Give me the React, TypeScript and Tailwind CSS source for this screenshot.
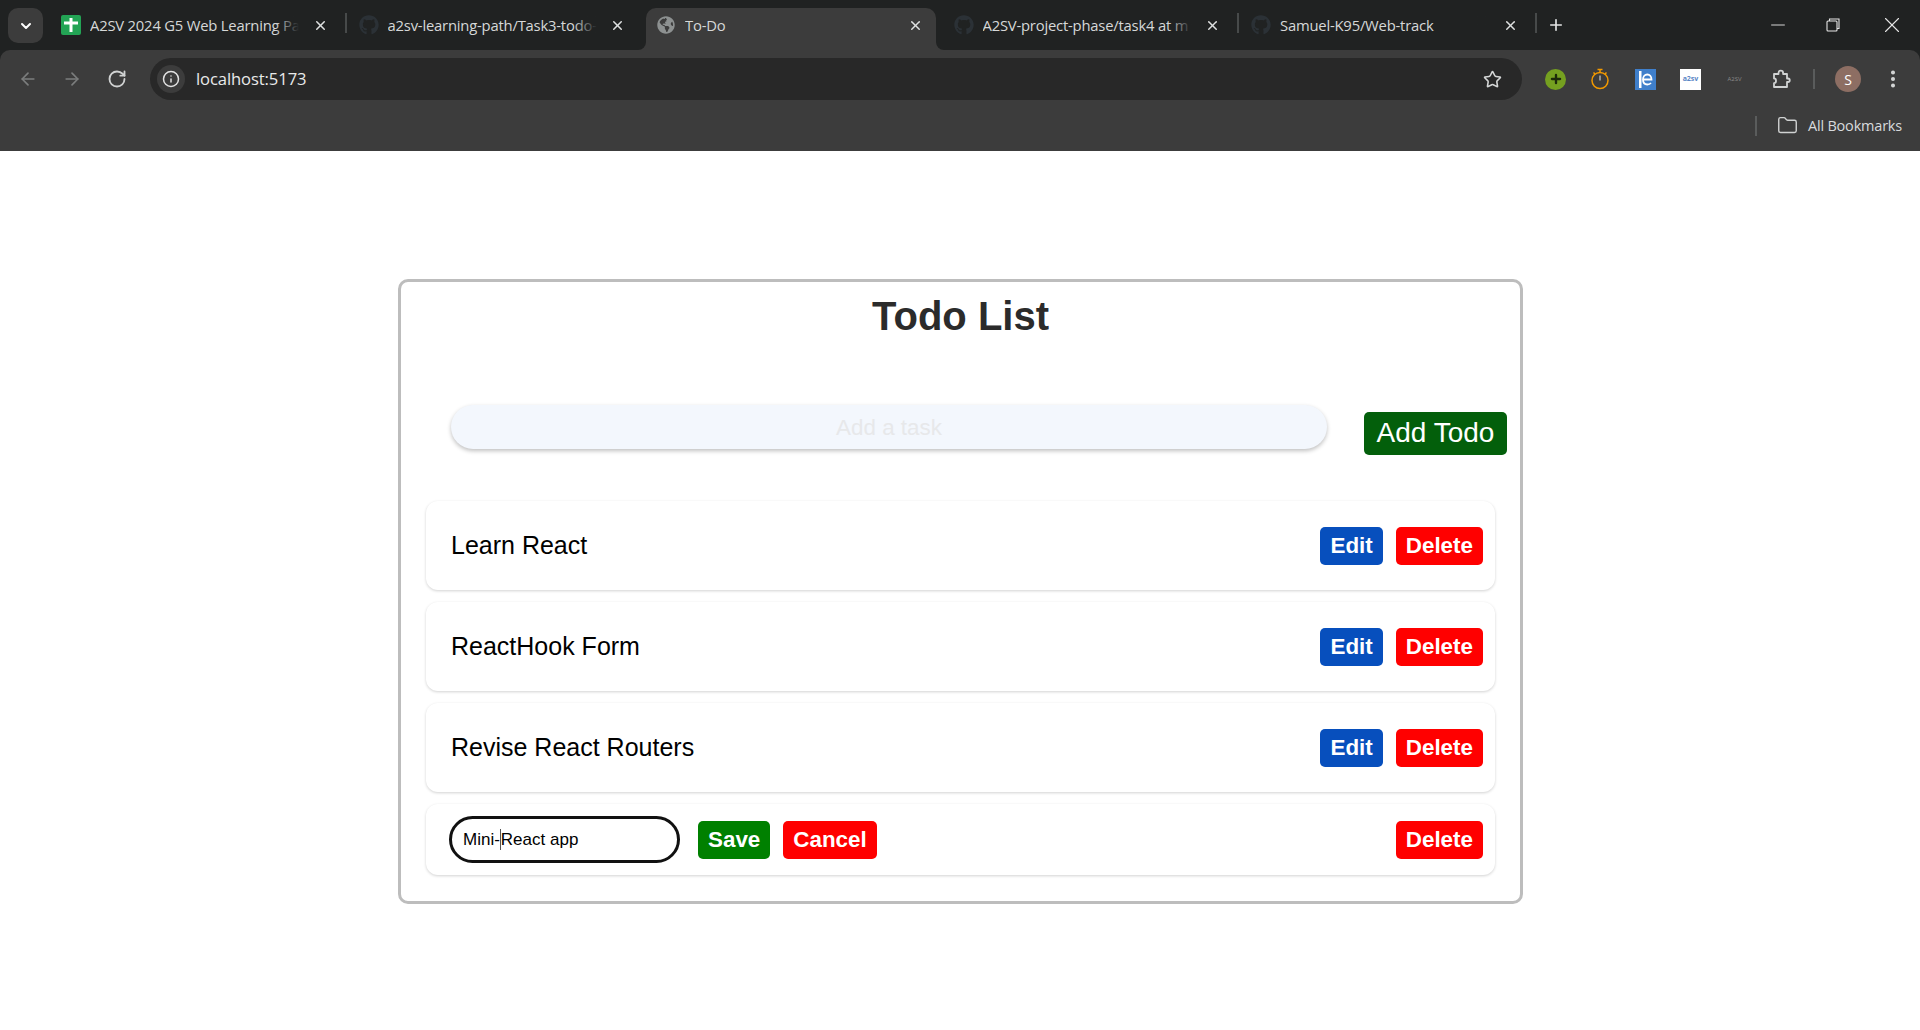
// App.tsx
import React from 'react'
import { ArrowLeft, ArrowRight, ChevronDown, EllipsisVertical, Folder, Info, Minus, Plus, RotateCw, Star, X } from 'lucide-react'
import { FaGithub, FaGlobeAmericas } from 'react-icons/fa'

const chromeFont = { fontFamily: '"Open Sans", "Noto Sans", sans-serif' }

interface TabProps {
  title: string
  icon: React.ReactNode
  active?: boolean
  separator?: boolean
}

const Tab: React.FC<TabProps> = ({ title, icon, active, separator }) => {
  return (
    <div className={`relative flex h-[42px] shrink-0 items-center pb-[8px] ${active ? 'ml-[3px] mr-[5px] w-[289.5px] rounded-t-[10px] bg-[#3c3c3c] pl-[10px] pr-[13px]' : 'w-[297.5px] pl-[13px] pr-[18px]'}`}>
      <div className="flex h-5 w-5 shrink-0 items-center justify-center">{icon}</div>
      <div className="relative ml-[9px] w-[209px] overflow-hidden whitespace-nowrap text-[14.8px] tracking-[-0.2px] text-[#d6d8d8]">
        {title}
        {!active && <div className="absolute inset-y-0 right-0 w-6 bg-gradient-to-r from-transparent to-[#202222]" />}
      </div>
      <X className="ml-auto h-[15px] w-[15px] shrink-0 text-[#dfe1e1]" strokeWidth={2.4} />
      {separator && <div className="absolute right-[-1px] top-[5px] h-5 w-[2px] bg-[#474a4a]" />}
      {active && (
        <>
          <div className="absolute bottom-0 left-[-8px] h-2 w-2 bg-[#3c3c3c]">
            <div className="h-full w-full rounded-br-[8px] bg-[#202222]" />
          </div>
          <div className="absolute bottom-0 right-[-8px] h-2 w-2 bg-[#3c3c3c]">
            <div className="h-full w-full rounded-bl-[8px] bg-[#202222]" />
          </div>
        </>
      )}
    </div>
  )
}

const SheetsIcon = () => (
  <svg width="20" height="20" viewBox="0 0 20 20">
    <rect width="20" height="20" rx="2" fill="#23a455" />
    <rect x="8.500" y="3" width="3" height="14" fill="#fff" />
    <rect x="3" y="6.500" width="14" height="3" fill="#fff" />
  </svg>
)

const BrowserChrome = () => {
  const github = <FaGithub className="h-5 w-5 text-[#2b3136]" />
  return (
    <header className="bg-[#202222]" style={chromeFont}>
      <div className="flex h-[50px] items-end">
        <div className="mb-[7px] ml-2 mr-[5px] flex h-[35px] w-[35px] shrink-0 items-center justify-center rounded-[10px] bg-[#3c3c3c]">
          <ChevronDown className="h-4 w-4 text-white" strokeWidth={3} />
        </div>
        <Tab title="A2SV 2024 G5 Web Learning Pa" icon={<SheetsIcon />} separator />
        <Tab title="a2sv-learning-path/Task3-todo-" icon={github} />
        <Tab title="To-Do" icon={<FaGlobeAmericas className="h-[18px] w-[18px] text-[#8d9191]" />} active />
        <Tab title="A2SV-project-phase/task4 at m" icon={github} separator />
        <Tab title="Samuel-K95/Web-track" icon={github} separator />
        <Plus className="mb-[16px] ml-[11px] h-[18px] w-[18px] shrink-0 text-[#e3e5e5]" strokeWidth={2.2} />
        <div className="mb-[12px] ml-auto flex items-center pr-[15px] text-[#e6e6e6]">
          <Minus className="h-[22px] w-[22px]" strokeWidth={1} />
          <svg className="ml-[34px]" width="20" height="20" viewBox="0 0 20 20" fill="none" stroke="currentColor" strokeWidth="1.1">
            <rect x="4" y="6" width="10" height="10" rx="1" />
            <path d="M6.500 6V4h9.500v9.500h-2" />
          </svg>
          <X className="ml-[36px] h-[26px] w-[26px]" strokeWidth={1} />
        </div>
      </div>

      <div className="h-[101px] rounded-t-[10px] bg-[#3c3c3c]">
        <div className="flex h-[58px] items-center">
          <div className="flex w-[150px] shrink-0 items-center gap-[24px] pl-[18px]">
            <ArrowLeft className="h-5 w-5 text-[#7b7d7d]" strokeWidth={2} />
            <ArrowRight className="h-5 w-5 text-[#7b7d7d]" strokeWidth={2} />
            <RotateCw className="ml-[1px] h-5 w-5 text-[#d0d2d2]" strokeWidth={2.2} />
          </div>
          <div className="flex h-[42px] w-[1372px] shrink-0 items-center rounded-full bg-[#282828] pl-[7px] pr-[20px]">
            <div className="flex h-7 w-7 items-center justify-center rounded-full bg-[#3c3c3c]">
              <Info className="h-[18px] w-[18px] text-[#e3e3e3]" strokeWidth={2} />
            </div>
            <span className="ml-[11px] text-[16.6px] tracking-[-0.1px] text-[#e8eaea]">localhost:5173</span>
            <Star className="ml-auto h-[19px] w-[19px] text-[#d5d7d7]" strokeWidth={2} />
          </div>
          <div className="ml-[23px] flex items-center">
            <div className="flex h-[21px] w-[21px] items-center justify-center rounded-full bg-[#75a020]">
              <Plus className="h-[14px] w-[14px] text-[#1d2a0a]" strokeWidth={4} />
            </div>
            <svg className="ml-[24px]" width="20" height="22" viewBox="0 0 20 22" fill="none" stroke="#f29900" strokeWidth="1.5">
              <circle cx="10" cy="12.500" r="8" />
              <path d="M7.500 1.500h5M10 1.500v3M3.500 4.500l1.500 1.500M16.500 4.500L15 6" />
              <path d="M10 7.500v5" stroke="#e6e6e6" strokeWidth="1" />
            </svg>
            <svg className="ml-[25px]" width="21" height="21" viewBox="0 0 21 21">
              <rect width="21" height="21" fill="#3f7fcb" />
              <rect x="4" y="2" width="2.500" height="17" fill="#fff" />
              <path d="M8 10.500h8.500c0-3-1.800-5-4.200-5S8 7.500 8 10.500s1.800 5 4.300 5c1.500 0 2.800-.5 3.700-1.500" fill="none" stroke="#fff" strokeWidth="1.800" />
            </svg>
            <div className="ml-[24px] flex h-[21px] w-[21px] items-center justify-center bg-white text-[7px] font-bold text-[#5a86c5]">a2sv</div>
            <div className="ml-[23px] w-[21px] text-center text-[6px] leading-none text-[#8a8a8a]">A2SV</div>
            <svg className="ml-[26px]" width="21" height="21" viewBox="0 0 21 21" fill="none" stroke="#d0d2d2" strokeWidth="1.800" strokeLinejoin="round">
              <path d="M3 5h4.500V4a2.300 2.300 0 0 1 4.600 0v1H16v4.500h1a1.700 1.700 0 0 1 0 3.500h-1v5H3v-3.800c2.700 0 2.700-4.800 0-4.800z" />
            </svg>
            <div className="ml-[21px] h-5 w-[2px] bg-[#5a5c5c]" />
            <div className="ml-[20px] flex h-[26px] w-[26px] items-center justify-center rounded-full bg-[#8d6e63] text-[14px] text-white">S</div>
            <EllipsisVertical className="ml-[21px] h-[22px] w-[22px] text-[#d5d7d7]" strokeWidth={2.4} />
          </div>
        </div>
        <div className="flex h-[35px] items-center justify-end pr-[18px]">
          <div className="mr-[20px] h-5 w-[2px] bg-[#5a5c5c]" />
          <Folder className="h-[21px] w-[21px] text-[#d0d2d2]" strokeWidth={1.6} />
          <span className="ml-[10px] text-[14.5px] tracking-[-0.2px] text-[#d7dadd]">All Bookmarks</span>
        </div>
      </div>
    </header>
  )
}

const ActionButton: React.FC<{ label: string; color: string }> = ({ label, color }) => {
  return (
    <button className={`h-[38px] rounded-[5px] px-[10px] text-[22.4px] font-bold text-white ${color}`}>
      {label}
    </button>
  )
}

const TodoRow: React.FC<{ title: string }> = ({ title }) => {
  return (
    <li className="flex h-[89px] items-center justify-between rounded-[12px] bg-white pl-[25px] pr-[12px] shadow-[0_1px_3px_rgba(0,0,0,0.18)]">
      <span className="text-[25px] text-black">{title}</span>
      <div className="flex gap-[13px]">
        <ActionButton label="Edit" color="bg-[#074fbd]" />
        <ActionButton label="Delete" color="bg-[#ff0000]" />
      </div>
    </li>
  )
}

const EditRow = () => {
  return (
    <li className="flex h-[71px] items-center rounded-[12px] bg-white pl-[23px] pr-[12px] shadow-[0_1px_3px_rgba(0,0,0,0.18)]">
      <div className="flex h-[47px] w-[231px] items-center rounded-full border-[3px] border-[#111111] pl-[11px] text-[17px] text-black">
        <span>Mini-</span>
        <span className="h-[21px] w-[1px] bg-[#555555]" />
        <span>React app</span>
      </div>
      <div className="ml-[18px] flex gap-[13px]">
        <ActionButton label="Save" color="bg-[#008000]" />
        <ActionButton label="Cancel" color="bg-[#ff0000]" />
      </div>
      <div className="ml-auto">
        <ActionButton label="Delete" color="bg-[#ff0000]" />
      </div>
    </li>
  )
}

const App = () => {
  return (
    <div className="min-h-screen bg-white" style={{ fontFamily: '"Liberation Sans", Arial, sans-serif' }}>
      <BrowserChrome />
      <main className="pt-[128px]">
        <div className="ml-[398px] w-[1125px] rounded-[10px] border-[3px] border-[#bdbdbd] bg-white px-[25px] pb-[26px] pt-[11px]">
          <h1 className="text-center text-[40px] font-bold leading-[46px] text-[#2b2b2b]">Todo List</h1>

          <div className="ml-[25px] mt-[66px] flex items-start">
            <div className="flex h-[44px] w-[876px] shrink-0 items-center justify-center rounded-full bg-[#f3f7fd] pt-[2px] text-[22.4px] text-[#e7e8ea] shadow-[0_2px_4px_rgba(0,0,0,0.25)]">
              Add a task
            </div>
            <button className="ml-[37px] mt-[7px] h-[43px] w-[143px] shrink-0 rounded-[5px] bg-[#035f0b] pb-[2px] text-[28px] text-white">
              Add Todo
            </button>
          </div>

          <ul className="mt-[46px] flex flex-col gap-[12px]">
            <TodoRow title="Learn React" />
            <TodoRow title="ReactHook Form" />
            <TodoRow title="Revise React Routers" />
            <EditRow />
          </ul>
        </div>
      </main>
    </div>
  )
}

export default App
